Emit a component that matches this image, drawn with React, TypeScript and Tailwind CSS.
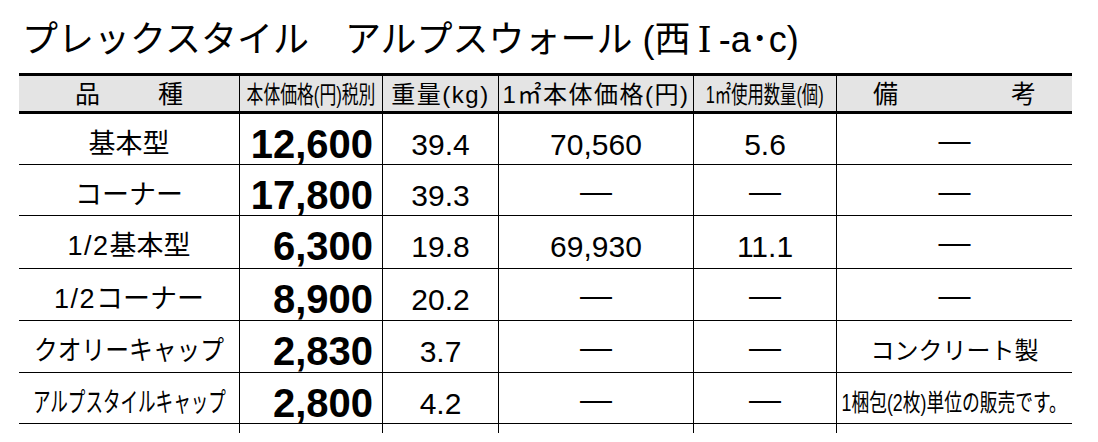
import React from 'react'

// ─── Price table: プレックスタイル アルプスウォール ─────────────────────────────

const FONT = "font-['Liberation_Sans','Noto_Sans_CJK_JP',sans-serif]"
const COLS = 'grid grid-cols-[221px_143px_116px_195px_143px_235px]'

interface Row {
  name: React.ReactNode
  price: string
  weight: string
  perM2: string
  qty: string
  note: React.ReactNode
  h: string
}

const DASH = <span className="mb-[8px] text-[32px] leading-none">—</span>

const ROWS: Row[] = [
  { name: '基本型', price: '12,600', weight: '39.4', perM2: '70,560', qty: '5.6', note: DASH, h: 'h-[51px]' },
  { name: 'コーナー', price: '17,800', weight: '39.3', perM2: '', qty: '', note: DASH, h: 'h-[51px]' },
  {
    name: <><span className="tracking-[1.5px]">1/2</span>基本型</>,
    price: '6,300', weight: '19.8', perM2: '69,930', qty: '11.1', note: DASH, h: 'h-[53px]',
  },
  {
    name: <><span className="tracking-[1.5px]">1/2</span>コーナー</>,
    price: '8,900', weight: '20.2', perM2: '', qty: '', note: DASH, h: 'h-[52px]',
  },
  {
    name: <span className="inline-block scale-x-[0.88]">クオリーキャップ</span>,
    price: '2,830', weight: '3.7', perM2: '', qty: '',
    note: <span className="text-[24px]">コンクリート製</span>, h: 'h-[52px]',
  },
  {
    name: <span className="inline-block scale-x-[0.65]">アルプスタイルキャップ</span>,
    price: '2,800', weight: '4.2', perM2: '', qty: '',
    note: <span className="inline-block scale-x-[0.74] text-[24px]">1梱包(2枚)単位の販売です。</span>,
    h: 'h-[51px]',
  },
]

function Cell({ children, className = '', last = false }: { children?: React.ReactNode; className?: string; last?: boolean }) {
  return (
    <div className={`flex h-full items-center whitespace-nowrap ${last ? '' : 'border-r border-black'} ${className}`}>
      {children}
    </div>
  )
}

export default function App() {
  return (
    <div className={`h-[442px] w-[1098px] overflow-hidden bg-white text-black ${FONT}`}>
      {/* Title */}
      <div className="h-[73px] pl-[22px] pt-[20px] text-[36px] leading-[40px] whitespace-nowrap">
        プレックスタイル　アルプスウォール (西
        <span className="mx-[7px] font-['DejaVu_Serif','Liberation_Serif',serif]">Ⅰ</span>-a･c)
      </div>

      <div className="ml-[19px] w-[1053px]">
        {/* Header */}
        <div className={`${COLS} h-[41px] border-y-[3px] border-black bg-[#e4e4e4] text-[24px]`}>
          <Cell className="justify-between px-[56px] text-[25px]">
            <span>品</span>
            <span>種</span>
          </Cell>
          <Cell className="justify-center">
            <span className="inline-block scale-x-[0.7]">本体価格(円)税別</span>
          </Cell>
          <Cell className="justify-center">
            <span className="tracking-[1.5px]">重量(kg)</span>
          </Cell>
          <Cell className="justify-center">
            <span className="tracking-[1.5px]">1㎡本体価格(円)</span>
          </Cell>
          <Cell className="justify-center">
            <span className="inline-block scale-x-[0.68]">1㎡使用数量(個)</span>
          </Cell>
          <Cell last className="justify-between px-[36px] text-[25px]">
            <span>備</span>
            <span>考</span>
          </Cell>
        </div>

        {/* Body */}
        {ROWS.map((row, i) => (
          <div key={i} className={`${COLS} ${row.h} border-b border-black`}>
            <Cell className="justify-center text-[27px]">{row.name}</Cell>
            <Cell className="justify-end pr-[9px] text-[40px] font-bold">{row.price}</Cell>
            <Cell className="justify-center text-[30px]">{row.weight}</Cell>
            <Cell className="justify-center text-[30px]">{row.perM2 || DASH}</Cell>
            <Cell className="justify-center text-[30px]">{row.qty || DASH}</Cell>
            <Cell last className="justify-center">{row.note}</Cell>
          </div>
        ))}
        {/* column ticks below the last rule */}
        <div className={`${COLS} h-[3px]`}>
          <Cell /><Cell /><Cell /><Cell /><Cell /><Cell last />
        </div>
      </div>
    </div>
  )
}
